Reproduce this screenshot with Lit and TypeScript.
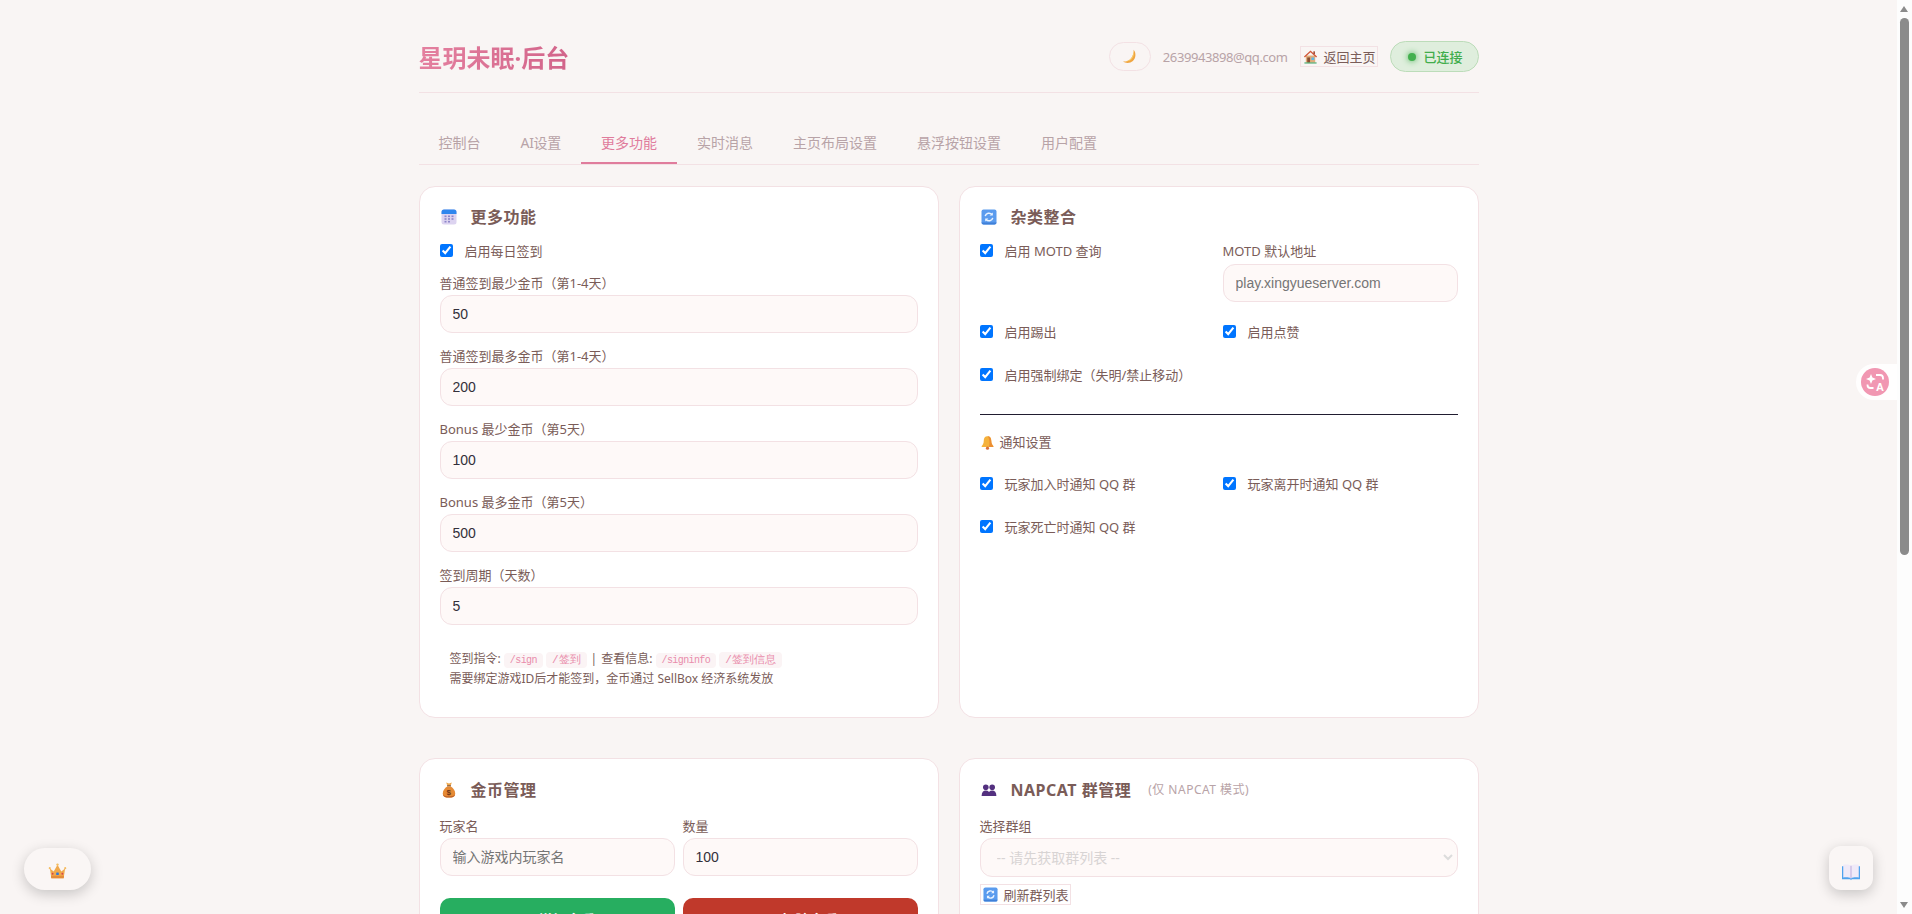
import { LitElement, html, css, svg, unsafeCSS } from "lit";
import { customElement } from "lit/decorators.js";

const icons = {
  calendar: svg`<rect x="0.5" y="0.5" width="15" height="15" rx="2.5" fill="#dcd3f0"/><path d="M.5 3A2.500 2.500 0 0 1 3 .5h10A2.500 2.500 0 0 1 15.500 3v2H.5z" fill="#2f86ee"/><g fill="#8d86c9"><rect x="3.5" y="6.5" width="2" height="1.6"/><rect x="7" y="6.5" width="2" height="1.6"/><rect x="10.5" y="6.5" width="2" height="1.6"/><rect x="3.5" y="9.2" width="2" height="1.6"/><rect x="7" y="9.2" width="2" height="1.6"/><rect x="10.5" y="9.2" width="2" height="1.6"/><rect x="3.5" y="11.9" width="2" height="1.6"/><rect x="7" y="11.9" width="2" height="1.6"/></g>`,
  refresh: svg`<rect x="0.5" y="0.5" width="15" height="15" rx="2" fill="#5a9bee"/><path d="M.5 13.500a2 2 0 0 0 2 2h11a2 2 0 0 0 2-2z" fill="#3f80d8"/><path d="M4.200 7.200A3.900 3.900 0 0 1 11 5.600M11.800 8.800A3.900 3.900 0 0 1 5 10.400" fill="none" stroke="#eaf3ff" stroke-width="1.5"/><path d="M11.800 3.400v3.200H8.600zM4.200 12.600V9.400h3.200z" fill="#eaf3ff"/>`,
  moon: svg`<path d="M12.400.8c2.800 3.200 2.600 8.800-.8 12C8.800 15.400 4 15.600 1 13.400c3.400.2 6.600-1 8.800-3.600 2-2.600 3-6 2.600-9z" fill="#f0a540"/><path d="M12.400.8c1.200 4.800-.4 9-3.600 11.200-2 1.300-5 1.800-7.800 1.400 3.400.2 6.600-1 8.800-3.600 2-2.600 3-6 2.600-9z" fill="#f8d06e"/>`,
  house: svg`<rect x="3" y="7" width="10" height="7.5" fill="#e0ac7a"/><rect x="4.5" y="9" width="3" height="5.5" fill="#8a4f32"/><rect x="9" y="9" width="3" height="2.8" fill="#5cb6e6"/><path d="M8 1.500 1 8l1 1 6-5.600L14 9l1-1z" fill="#d2573a"/><rect x="11" y="2.5" width="1.8" height="3" fill="#a7523c"/><rect x="1.5" y="14.3" width="13" height="1.2" fill="#45a86b"/>`,
  bell: svg`<path d="M8 1.400c-2.800 0-4 2.200-4 4.600 0 3-1.200 4.600-2.200 5.800v1h12.400v-1C13.200 10.600 12 9 12 6c0-2.400-1.200-4.600-4-4.600z" fill="#f5b23c"/><path d="M8 1.400c2.800 0 4 2.200 4 4.600 0 3 1.200 4.600 2.200 5.800v1H9.500C10.500 10 10.500 4 8 1.400z" fill="#ec8f33"/><circle cx="8" cy="14" r="1.7" fill="#d9703a"/>`,
  bag: svg`<path d="M5.200.5 8 1.500 10.800.5 9.800 3.500H6.200z" fill="#eea94f"/><rect x="6" y="3.3" width="4" height="1.2" rx=".5" fill="#7c4a25"/><path d="M6.200 4.500C3.800 6 1.800 8.600 1.800 11.400c0 3.200 2.600 4.100 6.200 4.100s6.200-.9 6.200-4.100c0-2.800-2-5.400-4.400-6.900z" fill="#e58a35"/><path d="M1.900 12.400c.4 2.400 2.800 3.100 6.100 3.100s5.700-.7 6.100-3.100c-1 1.300-3.100 1.800-6.100 1.800s-5.100-.5-6.100-1.800z" fill="#bd6226"/><text x="8" y="12.600" font-size="8" font-weight="700" text-anchor="middle" fill="#6e3515" font-family="Liberation Sans">$</text>`,
  group: svg`<g fill="#53307f"><circle cx="4.800" cy="5.300" r="2.800"/><circle cx="11.200" cy="5.300" r="2.800"/><path d="M.6 14c0-3.600 1.800-5.400 4.200-5.400S9 10.400 9 14z"/><path d="M7 14c0-3.600 1.800-5.400 4.200-5.400s4.200 1.800 4.200 5.400z"/></g>`,
  crown: svg`<path d="M1.600 5.500 4.800 8 8 2.400 11.200 8l3.200-2.500-1.200 8.100H2.800z" fill="#f0a94c"/><path d="M2.800 13.600h10.400l.3-2.100h-11z" fill="#e48b38"/><circle cx="8" cy="2.200" r="1" fill="#f4bd62"/><circle cx="1.500" cy="5.200" r=".9" fill="#f4bd62"/><circle cx="14.500" cy="5.200" r=".9" fill="#f4bd62"/><rect x="6.900" y="8.800" width="2.200" height="2.200" rx=".5" fill="#2f78d8"/><circle cx="3.900" cy="9.900" r=".8" fill="#d8434c"/><circle cx="12.100" cy="9.900" r=".8" fill="#d8434c"/>`,
  book: svg`<path d="M.8 3.400h14.400v10.400H8.600l-.6.8-.6-.8H.8z" fill="#4fa3ee"/><path d="M1.800 2.200C4 1.800 6.600 2 8 3c1.400-1 4-1.200 6.200-.8v10.200c-2.200-.3-4.800-.2-6.200.7-1.400-.9-4-1-6.200-.7z" fill="#f0eaf8"/><path d="M7.500 3h1v10h-1z" fill="#c9b9e2"/>`,
  plus: svg`<path d="M6.500 1.500h3v5h5v3h-5v5h-3v-5h-5v-3h5z" fill="#8a5bd0"/>`,
  minus: svg`<rect x="1.5" y="6.5" width="13" height="3" fill="#8a5bd0"/>`,
};

const icon = (name: keyof typeof icons, size = 16) =>
  html`<svg class="ico" width=${size} height=${size} viewBox="0 0 16 16">${icons[name]}</svg>`;

const signFields = [
  ["普通签到最少金币（第1-4天）", "50"],
  ["普通签到最多金币（第1-4天）", "200"],
  ["Bonus 最少金币（第5天）", "100"],
  ["Bonus 最多金币（第5天）", "500"],
  ["签到周期（天数）", "5"],
];

const tabs = ["控制台", "AI设置", "更多功能", "实时消息", "主页布局设置", "悬浮按钮设置", "用户配置"];

const chevron = `url("data:image/svg+xml,%3Csvg xmlns='http://www.w3.org/2000/svg' width='10' height='7'%3E%3Cpath d='M1 1l4 4 4-4' fill='none' stroke='%23dcdcdc' stroke-width='2'/%3E%3C/svg%3E")`;

@customElement("app-root")
export class AppRoot extends LitElement {
  static styles = css`
    :host {
      display: block;
      font-family: "Noto Sans", "Noto Sans CJK SC", sans-serif;
      color: #7a5c58;
    }
    * { box-sizing: border-box; }
    .page {
      height: 100vh;
      overflow: hidden;
      padding-right: 15px;
      background: #f9f5f4;
    }
    /* the browser hides real scrollbars in the screenshot, so this one is drawn */
    .scrollbar {
      position: fixed;
      right: 0;
      top: 0;
      width: 15px;
      height: 100vh;
      background: #fdfdfd;
    }
    .thumb {
      position: absolute;
      left: 3px;
      top: 18px;
      width: 9px;
      height: 537px;
      border-radius: 5px;
      background: #8b8b8b;
    }
    .arrow {
      position: absolute;
      left: 3px;
      width: 0;
      height: 0;
      border-left: 4.5px solid transparent;
      border-right: 4.5px solid transparent;
    }
    .arrow.up { top: 6px; border-bottom: 6px solid #8b8b8b; }
    .arrow.down { bottom: 6px; border-top: 6px solid #8b8b8b; }

    .wrap {
      width: 1060px;
      margin: 0 auto;
      padding: 40px 0 40px;
    }
    .ico { display: block; flex: none; }

    header {
      display: flex;
      align-items: center;
      justify-content: space-between;
      padding-bottom: 19px;
      border-bottom: 1px solid #f3e1e4;
    }
    h1 {
      margin: 0;
      padding-top: 2px;
      font-size: 24px;
      line-height: 31px;
      font-weight: 700;
      background: linear-gradient(90deg, #e4809f, #d2648a);
      -webkit-background-clip: text;
      background-clip: text;
      color: transparent;
    }
    .head-right { display: flex; align-items: center; }
    .moon {
      width: 42px;
      height: 29px;
      border: 1px solid #f3e1e4;
      border-radius: 15px;
      display: flex;
      align-items: center;
      justify-content: center;
      margin-right: 12px;
    }
    .email { font-size: 13px; letter-spacing: -0.42px; color: #b8a3a7; margin-right: 12px; }
    .plain-btn {
      display: inline-flex;
      align-items: center;
      gap: 6px;
      height: 21px;
      border: 1px solid #f3e1e4;
      font-size: 13px;
      color: #7a5c58;
    }
    .plain-btn.home { width: 78px; padding-left: 2px; margin-right: 12px; }
    .status {
      width: 89px;
      height: 31px;
      border-radius: 16px;
      background: #dfeedd;
      border: 1px solid #bcdcb9;
      display: flex;
      align-items: center;
      padding-left: 17px;
      gap: 8px;
      font-size: 13px;
      font-weight: 500;
      color: #41ad4c;
    }
    .dot {
      width: 8px;
      height: 8px;
      border-radius: 50%;
      background: #43b04e;
      box-shadow: 0 0 6px #43b04e;
    }

    nav {
      display: flex;
      margin: 29px 0 21px;
      border-bottom: 1px solid #f3e1e4;
    }
    .tab {
      padding: 11px 20px 9px;
      font-size: 14px;
      line-height: 20px;
      color: #b8a3a7;
      border-bottom: 2px solid transparent;
    }
    .tab.on { color: #e07c9c; border-bottom-color: #e07c9c; }
    .tab.narrow { letter-spacing: -0.3px; }

    .grid {
      display: grid;
      grid-template-columns: 520px 520px;
      gap: 40px 20px;
      margin-bottom: 41px;
    }
    .card {
      background: #fff;
      border: 1px solid #f3e1e4;
      border-radius: 16px;
      padding: 20px;
    }
    h2 {
      display: flex;
      align-items: center;
      margin: 0 0 15px;
      font-size: 16px;
      line-height: 20px;
      font-weight: 700;
      letter-spacing: 0.5px;
      color: #7a5c58;
    }
    h2 .ico { margin: 0 14px 0 1px; }
    h2 small {
      margin-left: 17px;
      font-size: 12px;
      font-weight: 400;
      color: #b8a3a7;
    }
    .tight { margin: 1px 0 17px; }

    .check {
      display: flex;
      align-items: center;
      align-self: start;
      font-size: 13px;
      line-height: 18px;
    }
    .check input { margin: 0 12px 2px 0; width: 13px; height: 13px; flex: none; }
    .check.lead { margin-bottom: 14px; }
    .field { display: block; margin-bottom: 14px; }
    .field span { display: block; font-size: 13px; line-height: 18px; margin-bottom: 3px; }
    input.txt, select {
      display: block;
      width: 100%;
      height: 38px;
      padding: 0 12px;
      border: 1px solid #f3e1e4;
      border-radius: 12px;
      background: #fef9f8;
      font-family: "Liberation Sans", "Noto Sans CJK SC", sans-serif;
      font-size: 14px;
      color: #33303a;
      outline: none;
    }
    select {
      height: 39px;
      padding-left: 16px;
      appearance: none;
      opacity: 1;
      color: #d8d4d4;
      font-family: "Noto Sans", "Noto Sans CJK SC", sans-serif;
      background-image: ${unsafeCSS(chevron)};
      background-repeat: no-repeat;
      background-position: right 4px center;
    }
    .hint { padding: 10px 10px 8px; font-size: 12px; line-height: 20px; }
    .hint code {
      font-family: "Liberation Mono", monospace;
      font-size: 10px;
      line-height: 1;
      letter-spacing: -0.6px;
      padding: 2px 6px;
      border-radius: 4px;
      background: #fbf4f5;
      color: #e98cab;
    }
    .hint code.cjk { font-size: 11px; letter-spacing: 0; }
    .bar { margin: 0 4px; }
    .two { display: grid; grid-template-columns: 235px 235px; column-gap: 8px; }
    .two.first { margin-bottom: 21px; }
    .two.first .field span { margin-bottom: 4px; }
    .two.checks { row-gap: 25px; }
    .two.notify { row-gap: 25px; }
    .two .field { margin: 0; }
    hr { border: 0; border-top: 1px solid #211d30; margin: 30px 0 18px; }
    .sub {
      display: flex;
      align-items: center;
      gap: 5px;
      font-size: 13px;
      line-height: 18px;
      margin-bottom: 24px;
    }
    .btn {
      height: 42px;
      margin-top: 22px;
      border: 0;
      border-radius: 10px;
      display: flex;
      align-items: center;
      justify-content: center;
      gap: 6px;
      color: #fff;
      font-size: 14px;
      font-weight: 700;
      font-family: inherit;
    }
    .green { background: #27ae60; }
    .red { background: #c0392b; }
    .plain-btn.refresh { width: 91px; height: 21px; margin-top: 7px; padding-left: 2px; display: flex; }
    .tail { height: 500px; }

    .fab {
      position: fixed;
      display: flex;
      align-items: center;
      justify-content: center;
      background: #faf6f5;
      box-shadow: 0 4px 14px rgba(0, 0, 0, 0.2);
    }
    .crown { left: 24px; top: 848px; width: 67px; height: 42px; border-radius: 21px; padding-top: 5px; }
    .guide { left: 1829px; top: 846px; width: 44px; height: 44px; border-radius: 12px; padding-top: 8px; }
    .lang {
      position: fixed;
      left: 1856px;
      top: 364px;
      width: 41px;
      height: 36px;
      padding-left: 5px;
      display: flex;
      align-items: center;
      background: #fffefe;
      border-radius: 18px 0 0 18px;
    }
    .lang div {
      width: 28px;
      height: 28px;
      border-radius: 50%;
      background: #f197b2;
    }
  `;

  private check(label: string) {
    return html`<label class="check"><input type="checkbox" checked />${label}</label>`;
  }

  private field(label: string, value: string, placeholder = "") {
    return html`<label class="field">
      <span>${label}</span>
      <input class="txt" .value=${value} placeholder=${placeholder} />
    </label>`;
  }

  render() {
    return html`
      <div class="page">
        <div class="wrap">
          <header>
            <h1>星玥未眠·后台</h1>
            <div class="head-right">
              <div class="moon">${icon("moon", 15)}</div>
              <span class="email">2639943898@qq.com</span>
              <div class="plain-btn home">${icon("house", 15)}返回主页</div>
              <div class="status"><span class="dot"></span>已连接</div>
            </div>
          </header>

          <nav>
            ${tabs.map((t, i) => html`<div class="tab ${i === 2 ? "on" : i === 1 ? "narrow" : ""}">${t}</div>`)}
          </nav>

          <div class="grid">
            <section class="card">
              <h2>${icon("calendar")}更多功能</h2>
              <label class="check lead"><input type="checkbox" checked />启用每日签到</label>
              ${signFields.map(([l, v]) => this.field(l, v))}
              <div class="hint">
                签到指令: <code>/sign</code> <code class="cjk">/签到</code><span class="bar">|</span>查看信息: <code>/signinfo</code> <code class="cjk">/签到信息</code><br />
                需要绑定游戏ID后才能签到，金币通过 SellBox 经济系统发放
              </div>
            </section>

            <section class="card">
              <h2>${icon("refresh")}杂类整合</h2>
              <div class="two first">
                ${this.check("启用 MOTD 查询")}
                <label class="field">
                  <span>MOTD 默认地址</span>
                  <input class="txt" placeholder="play.xingyueserver.com" />
                </label>
              </div>
              <div class="two checks">
                ${this.check("启用踢出")}
                ${this.check("启用点赞")}
                ${this.check("启用强制绑定（失明/禁止移动）")}
              </div>
              <hr />
              <div class="sub">${icon("bell", 15)}通知设置</div>
              <div class="two notify">
                ${this.check("玩家加入时通知 QQ 群")}
                ${this.check("玩家离开时通知 QQ 群")}
                ${this.check("玩家死亡时通知 QQ 群")}
              </div>
            </section>

            <section class="card">
              <h2 class="tight">${icon("bag")}金币管理</h2>
              <div class="two">
                ${this.field("玩家名", "", "输入游戏内玩家名")}
                ${this.field("数量", "100")}
                <button class="btn green">${icon("plus", 13)}增加金币</button>
                <button class="btn red">${icon("minus", 13)}扣除金币</button>
              </div>
            </section>

            <section class="card">
              <h2 class="tight">${icon("group")}NAPCAT 群管理<small>(仅 NAPCAT 模式)</small></h2>
              <label class="field" style="margin:0">
                <span>选择群组</span>
                <select disabled><option>-- 请先获取群列表 --</option></select>
              </label>
              <div class="plain-btn refresh">${icon("refresh", 15)}刷新群列表</div>
              <div class="tail"></div>
            </section>
          </div>
        </div>

        <div class="fab crown">${icon("crown", 19)}</div>
        <div class="fab guide">${icon("book", 20)}</div>
        <div class="lang">
          <div>
            <svg width="28" height="28" viewBox="0 0 28 28">
              <path d="M10 6l1.400 3.600 3.600 1.400-3.600 1.400L10 16l-1.400-3.600L5 11l3.600-1.400z" fill="#fff"/>
              <path d="M15 7h4a3 3 0 0 1 3 3v1.500M6.500 16.500v.5a3 3 0 0 0 3 3h3" fill="none" stroke="#fff" stroke-width="1.8"/>
              <text x="19" y="23" font-size="11" font-weight="700" text-anchor="middle" fill="#fff" font-family="Liberation Sans">A</text>
            </svg>
          </div>
        </div>

        <div class="scrollbar">
          <div class="arrow up"></div>
          <div class="thumb"></div>
          <div class="arrow down"></div>
        </div>
      </div>
    `;
  }
}
